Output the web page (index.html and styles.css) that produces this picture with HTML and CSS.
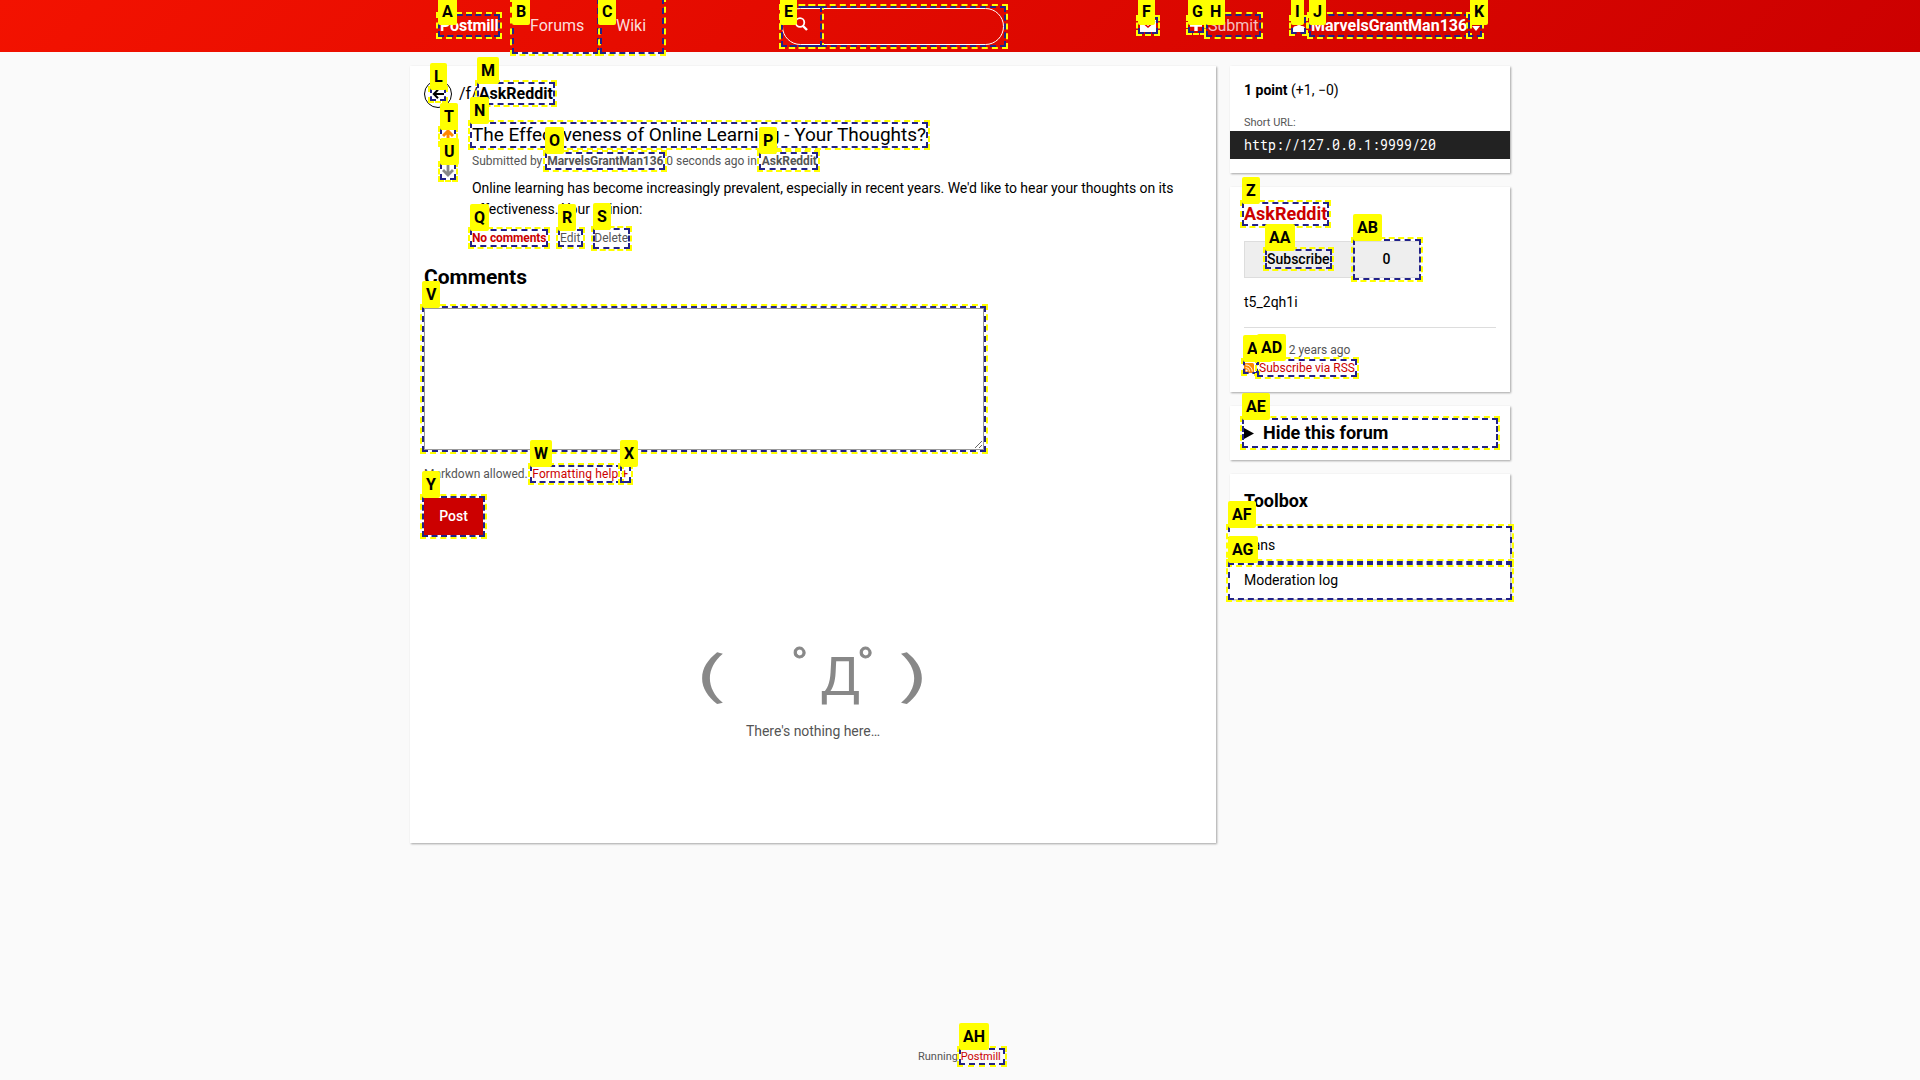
FILE: index.html
```html
<!DOCTYPE html>
<html lang="en">
<head>
<meta charset="utf-8">
<title>The Effectiveness of Online Learning - Your Thoughts?</title>
<link rel="stylesheet" href="styles.css">
</head>
<body>
<header class="site-nav">
  <a class="brand">Postmill</a>
  <a class="nav-forums">Forums</a>
  <a class="nav-wiki">Wiki</a>
  <form class="search">
    <svg width="14" height="14" viewBox="0 0 14 14"><circle cx="6" cy="5.5" r="4.3" fill="none" stroke="#fff" stroke-width="1.8"/><path d="M9 9l4 4" stroke="#fff" stroke-width="2.4"/></svg>
  </form>
  <svg class="mail" width="16" height="12" viewBox="0 0 16 12"><path d="M0 0h16v12H0z" fill="#fff"/><path d="M1 1l7 6 7-6" fill="none" stroke="#d00" stroke-width="1.5"/></svg>
  <svg class="plus" width="12" height="12" viewBox="0 0 12 12"><path d="M6 0v12M0 6h12" stroke="#fff" stroke-width="3.4"/></svg>
  <a class="submit">Submit</a>
  <svg class="user" width="12" height="12" viewBox="0 0 12 12"><circle cx="6" cy="3" r="3" fill="#fff"/><path d="M0 12V9q0-3 3-3h6q3 0 3 3v3z" fill="#fff"/></svg>
  <a class="username">MarvelsGrantMan136</a>
  <svg class="caret" width="8" height="5" viewBox="0 0 8 5"><path d="M0 0h8L4 5z" fill="#fff"/></svg>
</header>

<div class="page">
  <main class="card content">
    <div class="crumbs">
      <span class="back"><svg width="12" height="10" viewBox="0 0 12 10"><path d="M12 5H2M6 .8L1.8 5 6 9.2" fill="none" stroke="#000" stroke-width="2"/></svg></span>
      <p><span>/f/</span><b>AskReddit</b></p>
    </div>
    <article class="submission">
      <div class="votes">
        <svg width="12" height="12" viewBox="0 0 12 12"><path d="M6 12V2M1 7l5-5 5 5" fill="none" stroke="#f80" stroke-width="3"/></svg>
        <svg width="12" height="12" viewBox="0 0 12 12"><path d="M6 0v10M1 5l5 5 5-5" fill="none" stroke="#888" stroke-width="2.8"/></svg>
      </div>
      <div class="submission-body">
        <h1>The Effectiveness of Online Learning - Your Thoughts?</h1>
        <p class="meta">Submitted by <b>MarvelsGrantMan136</b> 0 seconds ago in <b>AskReddit</b></p>
        <p class="text">Online learning has become increasingly prevalent, especially in recent years. We'd like to hear your thoughts on its effectiveness. Your opinion:</p>
        <nav class="actions"><b>No comments</b><a>Edit</a><a>Delete</a></nav>
      </div>
    </article>
    <h2>Comments</h2>
    <textarea class="comment-box"></textarea>
    <p class="help">Markdown allowed. <a>Formatting help</a> <a>+</a></p>
    <button class="post">Post</button>
    <div class="empty">
      <div class="face"><span class="paren left">(</span><span class="ring">ﾟ</span><span class="mouth">Д</span><span class="ring">ﾟ</span><span class="paren right">)</span></div>
      <p>There's nothing here…</p>
    </div>
  </main>

  <aside class="sidebar">
    <section class="card score">
      <p><b>1 point</b> (+1, −0)</p>
      <p class="url-label">Short URL:</p>
      <div class="url"><span>http://127.0.0.1:9999/20</span></div>
    </section>
    <section class="card forum">
      <h3>AskReddit</h3>
      <div class="subscribe"><span class="sub-button">Subscribe</span><span class="sub-count">0</span></div>
      <p class="description">t5_2qh1i</p>
      <p class="created">Created 2 years ago</p>
      <p class="rss"><svg width="10" height="10" viewBox="0 0 10 10"><rect width="10" height="10" rx="1.5" fill="#f80"/><circle cx="2.6" cy="7.4" r="1" fill="#fff"/><path d="M1.6 4.5a4 4 0 0 1 4 4M1.6 1.8a6.7 6.7 0 0 1 6.7 6.7" fill="none" stroke="#fff" stroke-width=".9"/></svg><a>Subscribe via RSS</a></p>
    </section>
    <section class="card hide"><svg width="10" height="11" viewBox="0 0 10 11"><path d="M0 0l10 5.5L0 11z"/></svg><h3>Hide this forum</h3></section>
    <section class="card toolbox">
      <h3>Toolbox</h3>
      <a>Bans</a>
      <a>Moderation log</a>
    </section>
  </aside>
</div>
<footer>Running <a>Postmill</a></footer>

<div class="hints"></div>
<script src="hints.js"></script>
</body>
</html>
```
FILE: styles.css
```css
* { box-sizing: border-box; }
body { margin: 0; height: 1080px; overflow: hidden; display: flex; flex-direction: column; background: #fafafa; color: #000; font: 14px/21px Roboto, sans-serif; }
p, h1, h2, h3 { margin: 0; }
svg { display: block; flex: none; }

.site-nav { height: 52px; flex: none; display: flex; align-items: center; padding: 0 0 2px 440px; background: linear-gradient(135deg, #f31200, #c00); color: #fff; font-size: 16px; white-space: nowrap; }
.brand { width: 90px; font-weight: 700; letter-spacing: -.1px; }
.nav-forums { width: 86px; color: rgba(255,255,255,.87); }
.nav-wiki { width: 166px; color: rgba(255,255,255,.87); }
.search { width: 222px; height: 37px; margin-top: 3px; border: 1px solid #fff; border-radius: 19px; padding: 8px 11px; }
.mail { margin: 2px 0 0 136px; }
.plus { margin-left: 34px; }
.submit { width: 85px; margin-left: 6px; color: rgba(255,255,255,.75); }
.user { margin-top: 2px; }
.username { margin-left: 6px; font-weight: 700; }
.caret { margin: 6px 0 0 5px; }

.page { display: flex; align-items: flex-start; gap: 14px; padding: 14px 0 0 410px; }
.card { background: #fff; box-shadow: 1px 1px 2px rgba(0,0,0,.35); }
.content { width: 806px; height: 777px; padding: 14px; }
.crumbs { display: flex; align-items: center; height: 28px; font-size: 16px; }
.crumbs p { padding-bottom: 2px; }
.crumbs b { margin-left: 1px; }
.back { width: 28px; height: 28px; margin-right: 7px; border: 1px solid #000; border-radius: 50%; display: flex; align-items: center; justify-content: center; }
.submission { display: flex; margin-top: 12px; }
.votes { width: 48px; padding: 9px 0 0 18px; display: flex; flex-direction: column; gap: 24px; }
.submission-body { flex: 1; }
h1 { font-size: 19px; line-height: 29px; font-weight: 400; letter-spacing: -.03px; }
.meta { margin-top: 3px; font-size: 12px; line-height: 18px; color: #555; }
.meta b { margin-left: 2px; letter-spacing: -.06px; }
.text { margin-top: 8px; letter-spacing: -.06px; }
.actions { display: flex; gap: 12px; margin-top: 9px; font-size: 12px; line-height: 18px; color: #555; }
.actions b { color: #c00; width: 76px; letter-spacing: -.1px; white-space: nowrap; }
.actions a + a { margin-left: 2px; }
h2 { margin-top: 15px; font-size: 21px; line-height: 31px; }
.comment-box { display: block; width: 560px; height: 142px; margin-top: 15px; border: 1px solid #999; background: #fff; resize: both; }
.help { margin-top: 15px; font-size: 12px; line-height: 18px; color: #555; }
.help a, .rss a, footer a { color: #c00; }
.help a { margin-left: 1.5px; letter-spacing: .12px; }
.help a + a { margin-left: 0; }
.post { display: block; width: 59px; height: 37px; margin-top: 15px; padding: 0; border: 0; background: #c00; color: #fff; font: 500 14px/21px Roboto, sans-serif; }
.empty { margin-top: 98px; text-align: center; color: #555; letter-spacing: -.05px; }
.face { display: flex; justify-content: center; align-items: baseline; height: 88px; font-size: 56px; line-height: 76px; color: #888; letter-spacing: 0; }
.face span { display: block; width: 28px; }
.face .mouth { width: 38px; font-size: 53px; transform: translate(-1px, 2px); }
.face .ring { font-size: 50px; text-align: left; transform: translate(-2px, -4px); -webkit-text-stroke: 1px #888; }
.face .paren { width: 20px; font-family: "Noto Sans CJK JP", sans-serif; font-size: 51px; transform: translateY(1px) scaleX(2); }
.face .left { margin-left: -3px; margin-right: 74px; }
.face .right { margin-left: 16px; }

.sidebar { width: 280px; display: flex; flex-direction: column; gap: 14px; }
.sidebar .card { padding: 14px; }
h3 { font-size: 18px; line-height: 27px; }
.score { height: 107px; }
.url-label { margin-top: 13px; font-size: 11px; line-height: 17px; color: #555; }
.url { margin: 0 -14px; padding: 0 14px; background: #222; color: #fff; font: 13.33px/28px "Roboto Mono", "Liberation Mono", monospace; }
.url span { display: block; transform: translateY(-1px) scaleY(1.13); }
.forum { height: 205px; }
.forum h3 { margin-top: -1px; color: #c00; }
.subscribe { display: flex; margin-top: 14px; height: 37px; font-weight: 500; text-align: center; line-height: 35px; }
.sub-button { width: 110px; padding-left: 22px; text-align: left; border: 1px solid #ddd; background: #eee; }
.sub-count { width: 66px; border: 1px solid #ddd; border-left: 0; background: #eee; }
.description { margin-top: 14px; padding-bottom: 14px; border-bottom: 1px solid #ddd; }
.created { margin-top: 13px; font-size: 12px; line-height: 18px; color: #555; }
.rss { display: flex; align-items: center; gap: 5px; font-size: 12px; line-height: 18px; }
.sidebar .hide { height: 54px; display: flex; align-items: center; gap: 9px; }
.hide h3 { padding-bottom: 2px; }
.sidebar .toolbox { height: 125px; padding-bottom: 0; }
.toolbox h3 { margin: -1px 0 14px; }
.toolbox a { display: block; line-height: 35px; }

footer { margin-top: auto; padding: 0 0 15px 918px; font-size: 11px; line-height: 17px; color: #555; }

.hint { position: absolute; border: 2px dashed #222288; outline: 2px dashed #ff0; }
.tag { position: absolute; height: 27px; padding: 0 4px; border-radius: 2px; background: #ff0; color: #000; font: 700 16px/27px Roboto, sans-serif; }
```
FILE: hints.js
```js
// [label, box left, top, right, bottom, label left, label top]
const hints = [
  ["A", 438, 14, 500, 37, 438, -2],
  ["B", 512, -2, 599, 54, 512, -2],
  ["C", 600, -2, 664, 54, 598, -2],
  ["", 781, 6, 822, 47, 0, 0],
  ["E", 781, 6, 1006, 47, 780, -2],
  ["F", 1138, 17, 1158, 34, 1138, -2],
  ["G", 1188, 17, 1204, 33, 1188, -2],
  ["H", 1206, 14, 1261, 37, 1206, -2],
  ["I", 1291, 17, 1306, 34, 1291, -2],
  ["J", 1309, 14, 1470, 37, 1309, -2],
  ["K", 1468, 14, 1482, 37, 1470, -2],
  ["L", 430, 88, 446, 101],
  ["M", 477, 82, 555, 105],
  ["N", 470, 122, 928, 148],
  ["O", 545, 152, 665, 170],
  ["P", 759, 152, 818, 170],
  ["Q", 470, 229, 548, 247],
  ["R", 558, 229, 583, 247],
  ["S", 593, 228, 630, 249],
  ["T", 440, 128, 456, 145],
  ["U", 440, 163, 456, 180],
  ["V", 422, 306, 986, 452],
  ["W", 530, 465, 622, 483],
  ["X", 620, 465, 631, 483],
  ["Y", 422, 496, 485, 537],
  ["Z", 1242, 202, 1329, 226],
  ["AA", 1265, 249, 1332, 269],
  ["AB", 1353, 239, 1421, 280],
  ["AC", 1243, 360, 1258, 374],
  ["AD", 1257, 359, 1357, 377],
  ["AE", 1242, 418, 1498, 448],
  ["AF", 1228, 526, 1512, 565],
  ["AG", 1228, 561, 1512, 600],
  ["AH", 959, 1048, 1005, 1065]
];
const layer = document.querySelector(".hints");
const add = (cls, css, text) => {
  const el = document.createElement("div");
  el.className = cls;
  el.style.cssText = css;
  el.textContent = text;
  layer.append(el);
};
for (const [, l, t, r, b] of hints)
  add("hint", `left:${l}px;top:${t}px;width:${r - l}px;height:${b - t}px`, "");
for (const [name, l, t, , , x = l, y = t - 25] of hints)
  if (name) add("tag", `left:${x}px;top:${y}px`, name);
```
